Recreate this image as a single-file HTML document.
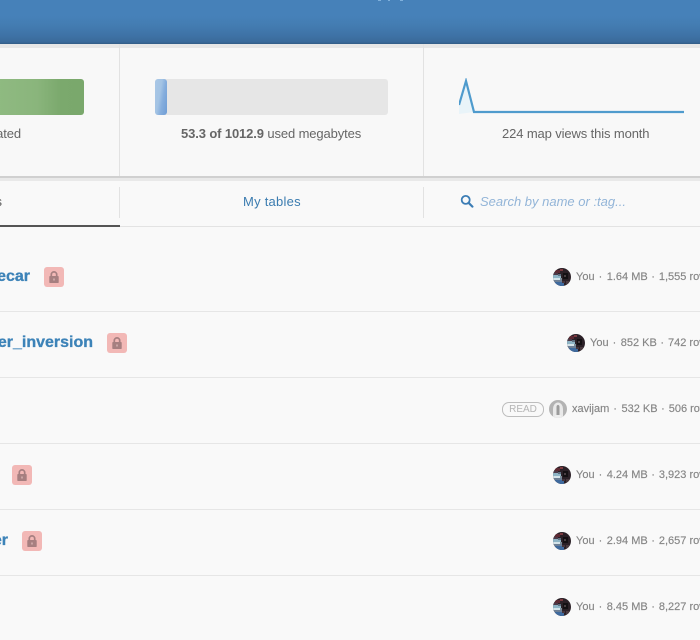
<!DOCTYPE html>
<html>
<head>
<meta charset="utf-8">
<style>
html,body{margin:0;padding:0;background:#f9f9f9;}
body{width:700px;height:640px;position:relative;overflow:hidden;font-family:"Liberation Sans",sans-serif;}
.a{position:absolute;}
.hdr{left:0;top:0;width:700px;height:44px;background:linear-gradient(#4681b9 0,#4681b9 16px,#437cb1 26px,#3e72a5 36px,#3a6a9a 42px,#325b85 44px);}
.band{left:0;top:44px;width:700px;height:4px;background:#e6e6e6;}
.stats{left:0;top:48px;width:700px;height:128px;background:#f8f8f8;}
.vl{width:1px;background:#e2e2e2;}
.t13{font-size:13px;line-height:16px;color:#666;white-space:nowrap;}
.st{letter-spacing:-0.12px;}
.sep{left:0;width:700px;height:1px;background:#e6e6e6;}
.title{font-size:16px;font-weight:bold;line-height:20px;color:#3d83b8;white-space:nowrap;text-align:right;-webkit-text-stroke:0.3px #3d83b8;}
.lock{width:20px;height:20px;border-radius:3px;background:#f2b8b6;}
.lock svg{position:absolute;left:5px;top:4px;}
.meta{font-size:11px;line-height:14px;color:#858585;white-space:nowrap;-webkit-text-stroke:0.15px #858585;}
.meta i{font-style:normal;margin:0 4.5px 0 4px;}
.meta i+i{margin:0 4px 0 3.5px;}
.av{width:18px;height:18px;}
.read{left:502px;top:402px;width:40px;height:13px;border:1px solid #bdbdbd;border-radius:7px;font-size:10px;line-height:14px;color:#b5b5b5;text-align:center;}
</style>
</head>
<body>
<div class="a hdr"></div>
<div class="a" style="left:378px;top:0;width:3px;height:1px;background:#7fb0dc"></div>
<div class="a" style="left:388px;top:0;width:2px;height:1px;background:#7fb0dc"></div>
<div class="a" style="left:400px;top:0;width:3px;height:1px;background:#7fb0dc"></div>
<div class="a band"></div>
<div class="a stats"></div>
<div class="a vl" style="left:119px;top:44px;height:132px"></div>
<div class="a vl" style="left:423px;top:44px;height:132px"></div>

<div class="a" style="left:-10px;top:79px;width:94px;height:36px;border-radius:3px;background:linear-gradient(90deg,#90bb82 0,#8ab57c 50%,#7ba96d 75%,#7aa86c 100%)"></div>
<div class="a t13 st" style="right:679px;top:126px">ated</div>

<div class="a" style="left:155px;top:79px;width:233px;height:36px;border-radius:3px;background:#e6e6e6"></div>
<div class="a" style="left:155px;top:79px;width:12px;height:36px;border-radius:3px;background:linear-gradient(100deg,#a9c7e6 0,#a3c3e4 40%,#86aedd 62%,#6f9dd5 100%)"></div>
<div class="a t13 st" style="left:181px;top:126px"><b style="color:#666">53.3 of 1012.9</b> used megabytes</div>

<svg class="a" style="left:459px;top:78px" width="226" height="38" viewBox="0 0 226 38">
<path d="M0 27 L7 2 L15 34 L0 36 Z" fill="#e9f4f9"/>
<path d="M0 27 L7 3 L15 34 L225 34" fill="none" stroke="#4f9bcd" stroke-width="2.2"/>
</svg>
<div class="a t13 st" style="left:502px;top:126px">224 map views this month</div>

<div class="a" style="left:0;top:176px;width:700px;height:2px;background:#d0d0d0"></div>
<div class="a" style="left:0;top:178px;width:700px;height:3px;background:#e9e9e9"></div>

<div class="a vl" style="left:119px;top:187px;height:31px"></div>
<div class="a vl" style="left:423px;top:187px;height:31px"></div>
<div class="a t13" style="right:698px;top:194px;color:#555">s</div>
<div class="a t13" style="left:243px;top:194px;color:#3b7cb0;letter-spacing:0.25px">My tables</div>
<svg class="a" style="left:460px;top:194px" width="14" height="14" viewBox="0 0 14 14">
<circle cx="5.7" cy="5.9" r="4" fill="none" stroke="#3c7db5" stroke-width="1.8"/>
<path d="M8.6 8.8 L12.4 12.6" stroke="#3c7db5" stroke-width="2.2" stroke-linecap="round"/>
</svg>
<div class="a t13" style="left:480px;top:194px;color:#93b5d8;font-style:italic">Search by name or :tag...</div>
<div class="a" style="left:0;top:226px;width:700px;height:1px;background:#e3e3e3"></div>
<div class="a" style="left:0;top:225px;width:120px;height:2px;background:#555"></div>

<div class="a sep" style="top:311px"></div>
<div class="a sep" style="top:377px"></div>
<div class="a sep" style="top:443px"></div>
<div class="a sep" style="top:509px"></div>
<div class="a sep" style="top:575px"></div>

<div class="a title" style="right:670px;top:267px">ecar</div>
<div class="a title" style="right:607px;top:333px">er_inversion</div>
<div class="a title" style="right:692px;top:531px">er</div>

<svg width="0" height="0" style="position:absolute"><defs>
<g id="lk"><path d="M2.3 6V3.6a2.7 2.7 0 0 1 5.4 0V6" fill="none" stroke="#a67f80" stroke-width="1.7"/><rect x="0.3" y="5" width="9.4" height="7" rx="0.8" fill="#a67f80"/><rect x="4.5" y="7.5" width="1" height="2" fill="#efc9c8"/></g>
<clipPath id="c"><circle cx="9" cy="9" r="9"/></clipPath>
<g id="you" clip-path="url(#c)"><rect width="18" height="18" fill="#2b2027"/>
<rect x="2" y="2" width="5" height="3" fill="#5c2a33"/><rect x="7" y="1" width="3" height="2" fill="#7a3a40"/><rect x="0" y="5" width="5" height="2" fill="#4d3a48"/>
<rect x="0" y="7" width="8" height="3" fill="#8fb5c6"/><rect x="5" y="6" width="3" height="2" fill="#5d6f80"/><rect x="0" y="10" width="7" height="2" fill="#d5e4ea"/><rect x="7" y="10" width="2" height="2" fill="#7c8c98"/>
<rect x="0" y="12" width="9" height="2" fill="#6d7f95"/><rect x="2" y="14" width="9" height="4" fill="#3f6a9e"/><rect x="9" y="13" width="3" height="2" fill="#45353c"/>
<rect x="10" y="5" width="5" height="6" fill="#141013"/><rect x="11" y="7" width="2" height="2" fill="#4a3f44"/><rect x="13" y="13" width="3" height="3" fill="#4a3a3f"/></g>
<g id="xav" clip-path="url(#c)"><rect width="18" height="18" fill="#b3b3b3"/><path d="M4 18V9a5 6.5 0 0 1 10 0v9z" fill="#e9e9e9"/><path d="M7.5 18V7a1.5 2 0 0 1 3 0v11z" fill="#9b9b9b"/><rect x="6" y="15" width="6" height="3" fill="#efefef"/></g>
</defs></svg>

<div class="a lock" style="left:44px;top:267px"><svg width="10" height="13" viewBox="0 0 10 13"><use href="#lk"/></svg></div>
<div class="a lock" style="left:107px;top:333px"><svg width="10" height="13" viewBox="0 0 10 13"><use href="#lk"/></svg></div>
<div class="a lock" style="left:12px;top:465px"><svg width="10" height="13" viewBox="0 0 10 13"><use href="#lk"/></svg></div>
<div class="a lock" style="left:22px;top:531px"><svg width="10" height="13" viewBox="0 0 10 13"><use href="#lk"/></svg></div>

<svg class="a av" style="left:553px;top:268px" viewBox="0 0 18 18"><use href="#you"/></svg>
<div class="a meta" style="left:576px;top:270px">You<i>·</i>1.64 MB<i>·</i>1,555 rows</div>

<svg class="a av" style="left:567px;top:334px" viewBox="0 0 18 18"><use href="#you"/></svg>
<div class="a meta" style="left:590px;top:336px">You<i>·</i>852 KB<i>·</i>742 rows</div>

<div class="a read">READ</div>
<svg class="a av" style="left:549px;top:400px" viewBox="0 0 18 18"><use href="#xav"/></svg>
<div class="a meta" style="left:572px;top:402px">xavijam<i>·</i>532 KB<i>·</i>506 rows</div>

<svg class="a av" style="left:553px;top:466px" viewBox="0 0 18 18"><use href="#you"/></svg>
<div class="a meta" style="left:576px;top:468px">You<i>·</i>4.24 MB<i>·</i>3,923 rows</div>

<svg class="a av" style="left:553px;top:532px" viewBox="0 0 18 18"><use href="#you"/></svg>
<div class="a meta" style="left:576px;top:534px">You<i>·</i>2.94 MB<i>·</i>2,657 rows</div>

<svg class="a av" style="left:553px;top:598px" viewBox="0 0 18 18"><use href="#you"/></svg>
<div class="a meta" style="left:576px;top:600px">You<i>·</i>8.45 MB<i>·</i>8,227 rows</div>
</body>
</html>
